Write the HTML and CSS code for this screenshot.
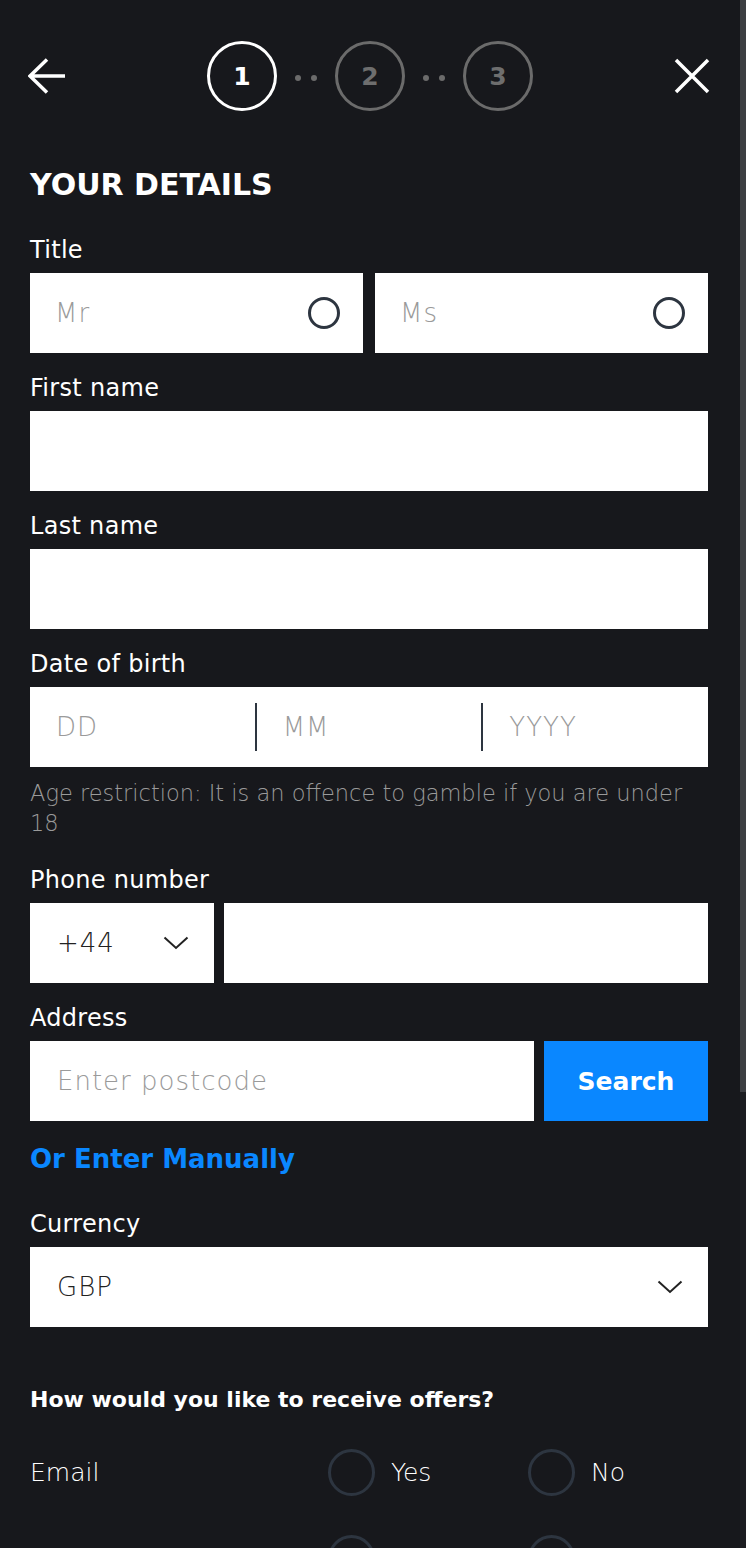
FILE: index.html
```html
<!DOCTYPE html>
<html lang="en">
<head>
    <meta charset="UTF-8">
    <meta name="viewport" content="width=device-width, initial-scale=1.0">
    <title>Your Details</title>
    <link rel="stylesheet" href="styles.css">
</head>
<body>
<div class="page">
    <div class="content">
        <header class="topbar">
            <button class="icon-btn" type="button" aria-label="Back">
                <svg width="38" height="36" viewBox="0 0 38 36"><path d="M19 1.5 L2 18 L19 34.5 M2 18 H37" fill="none" stroke="#fff" stroke-width="3.5"/></svg>
            </button>
            <ol class="steps">
                <li class="step active">1</li>
                <li class="dots"><span></span><span></span></li>
                <li class="step">2</li>
                <li class="dots"><span></span><span></span></li>
                <li class="step">3</li>
            </ol>
            <button class="icon-btn" type="button" aria-label="Close">
                <svg width="36" height="36" viewBox="0 0 36 36"><path d="M2 2 L34 34 M34 2 L2 34" fill="none" stroke="#fff" stroke-width="3.5"/></svg>
            </button>
        </header>

        <form class="form">
            <h1 class="heading">YOUR DETAILS</h1>

            <div class="field">
                <div class="label">Title</div>
                <div class="row">
                    <label class="choice"><span>Mr</span><span class="radio"></span></label>
                    <label class="choice"><span>Ms</span><span class="radio"></span></label>
                </div>
            </div>

            <div class="field">
                <label class="label" for="first-name">First name</label>
                <input class="input" id="first-name" type="text">
            </div>

            <div class="field">
                <label class="label" for="last-name">Last name</label>
                <input class="input" id="last-name" type="text">
            </div>

            <div class="field">
                <div class="label">Date of birth</div>
                <div class="dob">
                    <input type="text" placeholder="DD">
                    <input type="text" placeholder="MM">
                    <input type="text" placeholder="YYYY">
                </div>
                <p class="hint">Age restriction: It is an offence to gamble if you are under 18</p>
            </div>

            <div class="field">
                <label class="label" for="phone">Phone number</label>
                <div class="row tight">
                    <button class="select code" type="button">
                        <span>+44</span>
                        <svg width="26" height="14" viewBox="0 0 26 14"><path d="M1.5 1.5 L13 12 L24.5 1.5" fill="none" stroke="#222" stroke-width="2"/></svg>
                    </button>
                    <input class="input grow" id="phone" type="tel">
                </div>
            </div>

            <div class="field">
                <label class="label" for="postcode">Address</label>
                <div class="row tight">
                    <input class="input grow" id="postcode" type="text" placeholder="Enter postcode">
                    <button class="search-btn" type="button">Search</button>
                </div>
            </div>

            <a class="manual-link" href="#">Or Enter Manually</a>

            <div class="field">
                <div class="label">Currency</div>
                <button class="select" type="button">
                    <span>GBP</span>
                    <svg width="26" height="14" viewBox="0 0 26 14"><path d="M1.5 1.5 L13 12 L24.5 1.5" fill="none" stroke="#222" stroke-width="2"/></svg>
                </button>
            </div>

            <h2 class="subheading">How would you like to receive offers?</h2>

            <div class="offers">
                <div class="offer">
                    <span>Email</span>
                    <label class="opt"><span class="radio big"></span>Yes</label>
                    <label class="opt"><span class="radio big"></span>No</label>
                </div>
                <div class="offer">
                    <span>SMS</span>
                    <label class="opt"><span class="radio big"></span>Yes</label>
                    <label class="opt"><span class="radio big"></span>No</label>
                </div>
                <div class="offer">
                    <span>Phone</span>
                    <label class="opt"><span class="radio big"></span>Yes</label>
                    <label class="opt"><span class="radio big"></span>No</label>
                </div>
            </div>

            <button class="continue-btn" type="button">Continue</button>
        </form>
    </div>
</div>
<div class="scrollbar"><div class="thumb"></div></div>
</body>
</html>
```

FILE: styles.css
```css
html, body {
    margin: 0;
    height: 100%;
}
body {
    background-color: #17181c;
    color: #fff;
    font-family: "DejaVu Sans", sans-serif;
    overflow: hidden;
}
.content {
    padding: 0 38px 60px 30px;
}

/* fake scrollbar of the scroll panel */
.scrollbar {
    position: fixed;
    top: 0;
    right: 0;
    width: 6px;
    height: 100%;
    background-color: #1c1d21;
}
.thumb {
    height: 1092px;
    background-color: #3c3e42;
}

/* header */
.topbar {
    display: flex;
    align-items: center;
    justify-content: space-between;
    height: 70px;
    margin: 41px -2px 0 -2px;
}
.icon-btn {
    background: none;
    border: 0;
    padding: 0;
    display: flex;
}
.steps {
    display: flex;
    align-items: center;
    list-style: none;
    margin: 0;
    padding: 0;
}
.step {
    box-sizing: border-box;
    width: 70px;
    height: 70px;
    border: 3px solid #6b6b6b;
    border-radius: 50%;
    display: flex;
    align-items: center;
    justify-content: center;
    color: #6e6e6e;
    font-size: 25px;
    font-weight: bold;
}
.step.active {
    border-color: #fff;
    color: #fff;
}
.dots {
    display: flex;
    gap: 10px;
    margin: 3px 18px 0;
}
.dots span {
    width: 6px;
    height: 6px;
    border-radius: 50%;
    background-color: #6b6b6b;
}

/* form */
.form {
    display: flex;
    flex-direction: column;
}
.heading {
    margin: 56px 0 12px;
    font-size: 30px;
    line-height: 36px;
    font-weight: bold;
}
.field {
    margin-top: 20px;
}
.label {
    display: block;
    margin-bottom: 8px;
    font-size: 24px;
    letter-spacing: 0.3px;
    line-height: 30px;
}
.row {
    display: flex;
    gap: 12px;
}
.row.tight {
    gap: 10px;
}
.input, .dob input {
    box-sizing: border-box;
    display: block;
    width: 100%;
    height: 80px;
    border: 0;
    padding: 0 27px;
    background-color: #fff;
    font-family: inherit;
    font-size: 26px;
    letter-spacing: 1px;
    font-weight: 300;
    color: #222;
    outline: none;
}
.input::placeholder, .dob input::placeholder {
    color: #9a9a9a;
}
.grow {
    flex: 1;
    min-width: 0;
}
.choice {
    flex: 1;
    height: 80px;
    display: flex;
    align-items: center;
    justify-content: space-between;
    padding: 0 23px 0 25px;
    background-color: #fff;
    color: #9a9a9a;
    font-size: 26px;
    letter-spacing: 1px;
    font-weight: 300;
}
.radio {
    box-sizing: border-box;
    width: 32px;
    height: 32px;
    border: 3px solid #2d3540;
    border-radius: 50%;
}
.radio.big {
    width: 47px;
    height: 47px;
}
.dob {
    display: flex;
    height: 80px;
    align-items: center;
    background-color: #fff;
}
.dob input {
    flex: 1;
    min-width: 0;
    height: 48px;
    padding: 0 26px;
}
.dob input + input {
    border-left: 2px solid #2d3540;
}
.hint {
    margin: 11px 0 7px;
    color: #9a9a9a;
    font-size: 22.5px;
    font-weight: 300;
    line-height: 30px;
}
.select {
    box-sizing: border-box;
    width: 100%;
    height: 80px;
    display: flex;
    align-items: center;
    justify-content: space-between;
    border: 0;
    padding: 0 25px 0 27px;
    background-color: #fff;
    font-family: inherit;
    font-size: 26px;
    letter-spacing: 1px;
    font-weight: 300;
    color: #222;
}
.select.code {
    width: 184px;
    flex: none;
}
.search-btn {
    width: 164px;
    border: 0;
    background-color: #0a87ff;
    color: #fff;
    font-family: inherit;
    font-size: 25px;
    font-weight: bold;
}
.manual-link {
    margin: 23px 0 15px;
    align-self: flex-start;
    color: #0a87ff;
    font-size: 26px;
    font-weight: bold;
    line-height: 30px;
    text-decoration: none;
}
.subheading {
    margin: 58px 0 34px;
    font-size: 22px;
    line-height: 30px;
    font-weight: bold;
}
.offers {
    display: flex;
    flex-direction: column;
    gap: 40px;
}
.offer {
    display: grid;
    grid-template-columns: 298px 200px 1fr;
    align-items: center;
    height: 46px;
    font-size: 25px;
    font-weight: 300;
}
.opt {
    display: flex;
    align-items: center;
    gap: 16px;
}
.continue-btn {
    margin-top: 60px;
    height: 80px;
    border: 0;
    background-color: #0a87ff;
    color: #fff;
    font-family: inherit;
    font-size: 25px;
    font-weight: bold;
}
```
